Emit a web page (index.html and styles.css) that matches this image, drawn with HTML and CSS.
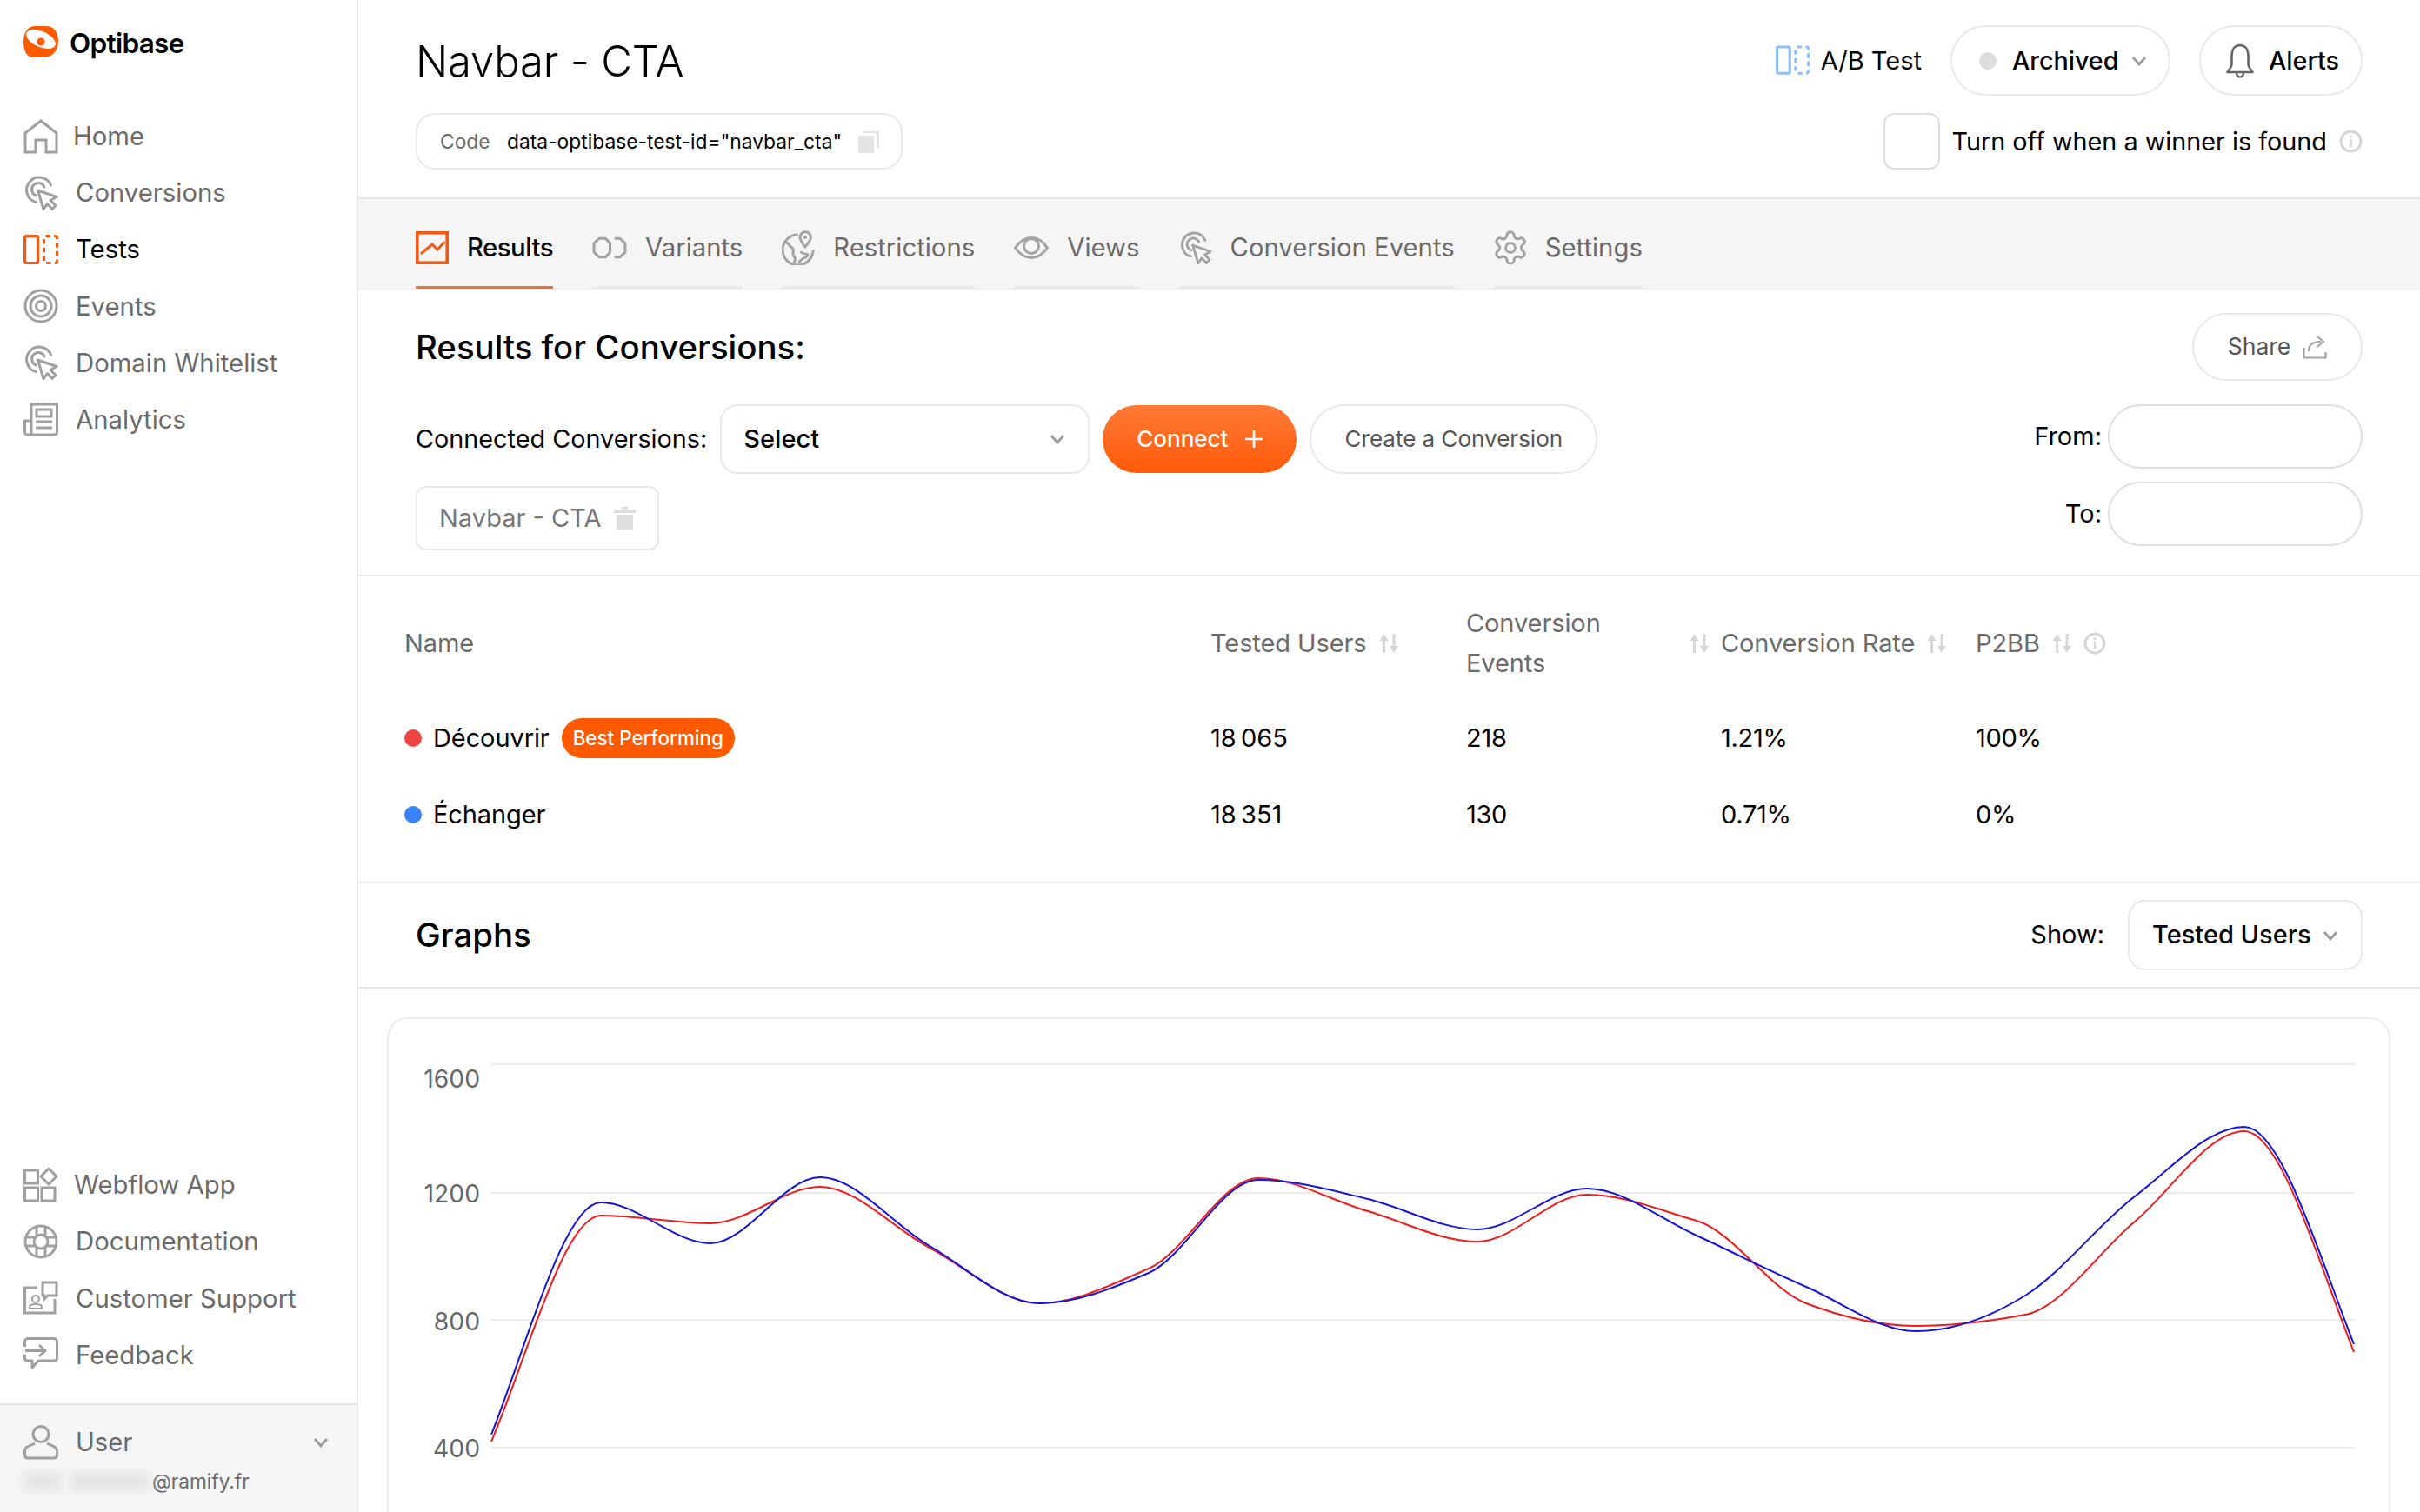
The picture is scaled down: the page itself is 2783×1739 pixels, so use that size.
FILE: index.html
```html
<!DOCTYPE html>
<html lang="en">
<head>
<meta charset="utf-8">
<title>Optibase - Navbar CTA</title>
<link rel="stylesheet" href="styles.css">
</head>
<body>
<svg class="sprite" aria-hidden="true">
  <symbol id="i-click" viewBox="0 0 40 40"><g fill="none" stroke="currentColor" stroke-width="3" stroke-linejoin="round" stroke-linecap="round"><path d="M14 30.5A14.5 14.5 0 1 1 31.5 11"/><path d="M14.5 23A7.5 7.5 0 1 1 24 13"/><path d="M16.5 17L38 24.5L31 28.5L37 34.5L33 38.5L27.5 32.5L23 38.5Z"/></g></symbol>
  <symbol id="i-ab" viewBox="0 0 40 34"><g fill="none" stroke="currentColor" stroke-width="3.2"><rect x="1.6" y="1.6" width="15" height="31" rx="1.5"/><rect x="23.5" y="1.6" width="15" height="31" rx="2" stroke-dasharray="5.5 4.2"/></g></symbol>
  <symbol id="i-chev" viewBox="0 0 18 12"><path d="M2 2L9 10L16 2" fill="none" stroke="currentColor" stroke-width="2.8"/></symbol>
  <symbol id="i-sort" viewBox="0 0 26 24"><g fill="#d6d6d6"><path d="M6 9h3v14H6z"/><path d="M7.500 1L12.500 9H2.500Z"/><path d="M17.500 1h3v14h-3z"/><path d="M19 23L14 15H24Z"/></g></symbol>
  <symbol id="i-info" viewBox="0 0 26 26"><circle cx="13" cy="13" r="11" fill="none" stroke="#d6d6d6" stroke-width="3"/><path d="M11.700 11h2.600v8.500h-2.600zM11.700 6.500h2.600v2.600h-2.600z" fill="#d6d6d6"/></symbol>
</svg>

<div class="app">
  <aside class="sidebar">
    <div class="brand">
      <svg class="brand-logo" viewBox="0 0 40 36"><path d="M13 0H26C35 0 40 7 40 17C40 29 33 36 22 36H12C4 36 0 29 0 18C0 7 5 0 13 0Z" fill="#ff5a00"/><ellipse cx="20" cy="15" rx="18" ry="9" transform="rotate(24 20 15)" fill="#fff"/><circle cx="20" cy="18" r="4.600" fill="#ff5a00"/></svg>
      <span class="brand-name">Optibase</span>
    </div>
    <nav class="nav">
      <a class="nav-item"><svg class="nav-icon" viewBox="0 0 40 40"><path d="M2 38V16L20 2L38 16V38H26V24H14V38Z" fill="none" stroke="currentColor" stroke-width="3"/></svg><span class="nav-label nav-label-home">Home</span></a>
      <a class="nav-item"><svg class="nav-icon"><use href="#i-click"/></svg><span class="nav-label">Conversions</span></a>
      <a class="nav-item nav-item-active"><svg class="nav-icon nav-icon-ab"><use href="#i-ab"/></svg><span class="nav-label">Tests</span></a>
      <a class="nav-item"><svg class="nav-icon" viewBox="0 0 40 40"><g fill="none" stroke="currentColor" stroke-width="3"><circle cx="20" cy="20" r="18"/><circle cx="20" cy="20" r="12"/><circle cx="20" cy="20" r="5.500"/></g></svg><span class="nav-label">Events</span></a>
      <a class="nav-item"><svg class="nav-icon"><use href="#i-click"/></svg><span class="nav-label">Domain Whitelist</span></a>
      <a class="nav-item"><svg class="nav-icon" viewBox="0 0 40 40"><g fill="none" stroke="currentColor" stroke-width="3"><path d="M8 37H35C37 37 38.500 36 38.500 34V2H9V35C9 36 8 37 6 37C3 37 1.500 36 1.500 34V21H9"/><rect x="15" y="8" width="17" height="8"/><path d="M14 22H33M14 29H33"/></g></svg><span class="nav-label">Analytics</span></a>
    </nav>
    <nav class="nav nav-bottom">
      <a class="nav-item"><svg class="nav-icon" viewBox="0 0 40 40"><g fill="none" stroke="currentColor" stroke-width="3"><rect x="1.500" y="3" width="15" height="15"/><rect x="1.500" y="23" width="15" height="15"/><rect x="21" y="23" width="15" height="15"/><path d="M29 1L38 10L29 19L20 10Z"/></g></svg><span class="nav-label nav-label-web">Webflow App</span></a>
      <a class="nav-item"><svg class="nav-icon" viewBox="0 0 40 40"><g fill="none" stroke="currentColor" stroke-width="3"><circle cx="20" cy="20" r="18"/><circle cx="20" cy="20" r="8"/><path d="M15 3V13M25 3V13M15 27V37M25 27V37M3 15H13M3 25H13M27 15H37M27 25H37"/></g></svg><span class="nav-label">Documentation</span></a>
      <a class="nav-item"><svg class="nav-icon" viewBox="0 0 40 40"><g fill="none" stroke="currentColor" stroke-width="3"><path d="M16 8H1.500V37H36V21"/><path d="M22 2H38V17H28L24 21V17H22Z"/></g><g fill="none" stroke="currentColor" stroke-width="2"><circle cx="14" cy="21" r="4"/><path d="M7 32V30C7 28 10 27 14 27S21 28 21 30V32Z"/></g></svg><span class="nav-label">Customer Support</span></a>
      <a class="nav-item"><svg class="nav-icon" viewBox="0 0 40 40"><g fill="none" stroke="currentColor" stroke-width="3" stroke-linejoin="round"><path d="M1.500 11V5C1.500 3 3 1.500 5 1.500H35C37 1.500 38.500 3 38.500 5V24C38.500 26 37 27 35 27H17L10 35V27H5C3 27 1.500 26 1.500 24V20"/><path d="M2 15.500H24M18 9L25 15.500L18 22"/></g></svg><span class="nav-label">Feedback</span></a>
    </nav>
    <div class="user">
      <div class="user-row">
        <svg class="nav-icon" viewBox="0 0 40 40"><g fill="none" stroke="currentColor" stroke-width="3"><circle cx="20" cy="10.500" r="9"/><path d="M13 21C8 24 1.500 24 1.500 30V34C1.500 37 3 38 5 38H35C37 38 38.500 37 38.500 34V30C38.500 24 32 24 27 21"/></g></svg>
        <span class="nav-label">User</span>
        <svg class="user-chev"><use href="#i-chev"/></svg>
      </div>
      <div class="user-mail"><span class="blur blur-a"></span><span class="blur blur-b"></span><span>@ramify.fr</span></div>
    </div>
  </aside>

  <main class="main">
    <header class="head">
      <div class="head-row">
        <h1 class="title">Navbar - CTA</h1>
        <div class="head-actions">
          <div class="ab"><svg class="ab-icon"><use href="#i-ab"/></svg><span>A/B Test</span></div>
          <div class="pill pill-status"><span class="status-dot"></span><span class="strong">Archived</span><svg class="chev"><use href="#i-chev"/></svg></div>
          <div class="pill pill-alerts"><svg class="bell" viewBox="0 0 32 40"><g fill="none" stroke="#666" stroke-width="2.600" stroke-linejoin="round"><path d="M16 2C9 2 6.500 8 6.500 14V24C6.500 28 3 30 1.500 33H30.500C29 30 25.500 28 25.500 24V14C25.500 8 23 2 16 2Z"/><path d="M12 33C12 37.500 14 38.500 16 38.500S20 37.500 20 33"/></g></svg><span class="strong">Alerts</span></div>
        </div>
      </div>
      <div class="head-row head-row-2">
        <div class="code"><span class="code-label">Code</span><span class="code-value">data-optibase-test-id="navbar_cta"</span>
          <svg class="copy" viewBox="0 0 24 26"><rect x="0" y="6" width="18" height="20" fill="#e3e3e3"/><path d="M6 2H23V20" fill="none" stroke="#e3e3e3" stroke-width="2"/></svg>
        </div>
        <div class="autooff"><span class="check"></span><span class="autooff-text">Turn off when a winner is found</span><svg class="info"><use href="#i-info"/></svg></div>
      </div>
    </header>

    <div class="tabs">
      <a class="tab tab-active"><svg class="tab-icon" viewBox="0 0 38 38"><rect x="1.800" y="1.800" width="34.400" height="34.400" fill="none" stroke="#f05a16" stroke-width="3.600"/><path d="M6 26L19 15L25 21L33.500 12" fill="none" stroke="#f05a16" stroke-width="3"/></svg><span>Results</span></a>
      <a class="tab"><svg class="tab-icon tab-icon-wide" viewBox="0 0 39 24"><g fill="none" stroke="#a3a3a3" stroke-width="3" stroke-linejoin="round"><path d="M8 1.500H15L20 7V17L15 22.500H8L2 17V7Z"/><path d="M25 1.500H31L37 7V17L31 22.500H25"/></g></svg><span>Variants</span></a>
      <a class="tab"><svg class="tab-icon" viewBox="0 0 38 40"><g fill="none" stroke="#a3a3a3" stroke-width="3" stroke-linejoin="round"><path d="M19 5A17.500 17.500 0 1 0 36 22"/><path d="M4 13C9 15 8 18 12 20C16 22 10 27 15 31C16 34 15 36 14 38"/><path d="M20 38C21 31 29 33 30 28C28 26 23 28 22 24"/><path d="M27 19C23 14 21 11 21 8A6.200 6.200 0 0 1 33.500 8C33.500 11 31 14 27 19Z"/></g><circle cx="27" cy="8" r="2" fill="#a3a3a3"/></svg><span>Restrictions</span></a>
      <a class="tab"><svg class="tab-icon tab-icon-wide" viewBox="0 0 40 26"><g fill="none" stroke="#a3a3a3" stroke-width="3" stroke-linejoin="round"><path d="M1.500 13C7 5 13 1.500 20 1.500S33 5 38.500 13C33 21 27 24.500 20 24.500S7 21 1.500 13Z"/><circle cx="20" cy="11" r="8.500"/></g></svg><span>Views</span></a>
      <a class="tab"><svg class="tab-icon tab-icon-click"><use href="#i-click"/></svg><span>Conversion Events</span></a>
      <a class="tab"><svg class="tab-icon" viewBox="1.500 1.500 21 21"><g fill="none" stroke="#a3a3a3" stroke-width="1.600"><path d="M12.220 2h-.44a2 2 0 0 0-2 2v.18a2 2 0 0 1-1 1.730l-.43.250a2 2 0 0 1-2 0l-.15-.08a2 2 0 0 0-2.730.730l-.22.380a2 2 0 0 0 .73 2.730l.15.100a2 2 0 0 1 1 1.720v.510a2 2 0 0 1-1 1.740l-.15.090a2 2 0 0 0-.73 2.730l.22.380a2 2 0 0 0 2.730.730l.15-.08a2 2 0 0 1 2 0l.43.250a2 2 0 0 1 1 1.730V20a2 2 0 0 0 2 2h.44a2 2 0 0 0 2-2v-.18a2 2 0 0 1 1-1.730l.43-.25a2 2 0 0 1 2 0l.15.080a2 2 0 0 0 2.730-.730l.22-.39a2 2 0 0 0-.73-2.730l-.15-.08a2 2 0 0 1-1-1.740v-.5a2 2 0 0 1 1-1.740l.15-.09a2 2 0 0 0 .73-2.730l-.22-.38a2 2 0 0 0-2.730-.73l-.15.08a2 2 0 0 1-2 0l-.43-.25a2 2 0 0 1-1-1.730V4a2 2 0 0 0-2-2z"/><circle cx="12" cy="12" r="3"/></g></svg><span>Settings</span></a>
    </div>

    <section class="results">
      <div class="results-top">
        <h2 class="h2">Results for Conversions:</h2>
        <div class="pill pill-share"><span>Share</span><svg class="share" viewBox="0 0 28 28"><g fill="none" stroke="#a3a3a3" stroke-width="2.200"><path d="M1.500 15V26.500H26.500V20"/><path d="M7 19C7 12 11 8 21 8M16 1.500L24 8L16 14.500"/></g></svg></div>
      </div>
      <div class="results-body">
        <div class="connect">
          <div class="connect-row">
            <span class="connect-label">Connected Conversions:</span>
            <div class="select select-conv"><span class="strong">Select</span><svg class="chev"><use href="#i-chev"/></svg></div>
            <div class="btn-primary"><span>Connect</span><svg class="plus" viewBox="0 0 20 20"><path d="M10 0V20M0 10H20" stroke="#fff" stroke-width="2.600"/></svg></div>
            <div class="btn-ghost">Create a Conversion</div>
          </div>
          <div class="tag"><span>Navbar - CTA</span><svg class="trash" viewBox="0 0 25 26"><path d="M9 0H16V3H25V7H0V3H9ZM3 9H22V26H3Z" fill="#dedede"/></svg></div>
        </div>
        <div class="dates">
          <div class="date-row"><span>From:</span><span class="date-input"></span></div>
          <div class="date-row"><span>To:</span><span class="date-input"></span></div>
        </div>
      </div>
    </section>

    <section class="table">
      <div class="tr tr-head">
        <div class="th">Name</div>
        <div class="th"><span>Tested Users</span><svg class="sort"><use href="#i-sort"/></svg></div>
        <div class="th th-split"><span class="th-wrap">Conversion Events</span><svg class="sort"><use href="#i-sort"/></svg></div>
        <div class="th"><span>Conversion Rate</span><svg class="sort"><use href="#i-sort"/></svg></div>
        <div class="th"><span>P2BB</span><svg class="sort"><use href="#i-sort"/></svg><svg class="info"><use href="#i-info"/></svg></div>
      </div>
      <div class="tr">
        <div class="td td-name"><span class="dot dot-red"></span><span>Découvrir</span><span class="badge">Best Performing</span></div>
        <div class="td">18&#8239;065</div>
        <div class="td">218</div>
        <div class="td">1.21%</div>
        <div class="td">100%</div>
      </div>
      <div class="tr">
        <div class="td td-name"><span class="dot dot-blue"></span><span>Échanger</span></div>
        <div class="td">18&#8239;351</div>
        <div class="td">130</div>
        <div class="td">0.71%</div>
        <div class="td">0%</div>
      </div>
    </section>

    <section class="graphs-head">
      <h2 class="h2">Graphs</h2>
      <div class="show"><span>Show:</span><div class="select select-show"><span class="strong">Tested Users</span><svg class="chev"><use href="#i-chev"/></svg></div></div>
    </section>

    <div class="chart-card">
      <svg class="chart" viewBox="447 1173 2300 566">
        <g class="grid">
          <path d="M565 1225H2708M565 1373H2708M565 1519H2708M565 1666H2708"/>
        </g>
        <g class="axis">
          <text x="552" y="1252">1600</text>
          <text x="552" y="1384">1200</text>
          <text x="552" y="1531">800</text>
          <text x="552" y="1677">400</text>
        </g>
        <path class="line line-red" d="M565 1659C607 1560 649 1399 691 1399S775 1408 817 1408S901 1366 943 1366S1027 1414 1069 1436S1153 1500 1195 1500S1279 1478 1321 1460S1405 1356 1447 1356S1531 1382 1573 1394S1657 1429 1699 1429S1783 1375 1825 1375S1909 1393 1951 1405S2035 1484 2077 1500S2161 1526 2203 1526S2287 1521 2329 1513S2413 1441 2455 1406S2539 1302 2581 1302S2665 1450 2707 1556"/>
        <path class="line line-blue" d="M565 1651C607 1545 649 1384 691 1384S775 1431 817 1431S901 1355 943 1355S1027 1410 1069 1434S1153 1500 1195 1500S1279 1483 1321 1465S1405 1358 1447 1358S1531 1370 1573 1380S1657 1415 1699 1415S1783 1368 1825 1368S1909 1403 1951 1422S2035 1463 2077 1481S2161 1532 2203 1532S2287 1517 2329 1491S2413 1409 2455 1377S2539 1297 2581 1297S2665 1440 2707 1547"/>
      </svg>
    </div>
  </main>
</div>
</body>
</html>
```

FILE: styles.css
```css
* { box-sizing: border-box; }
html, body { margin: 0; padding: 0; }
body {
  width: 2783px;
  height: 1739px;
  overflow: hidden;
  background: #fff;
  color: #000;
  font-family: Inter, "Noto Sans", sans-serif;
  font-size: 29px;
  line-height: 1.2;
}
.sprite { display: none; }
.strong { font-weight: 500; }
h1, h2 { margin: 0; }

.app { display: flex; height: 1739px; }

/* Sidebar */
.sidebar {
  width: 412px;
  flex: none;
  display: flex;
  flex-direction: column;
  border-right: 2px solid #e9e9e9;
  padding-top: 30px;
}
.brand { display: flex; align-items: center; gap: 13px; height: 36px; padding-left: 27px; }
.brand-logo { width: 40px; height: 36px; }
.brand-name { font-size: 31.500px; font-weight: 600; letter-spacing: -0.7px; padding-top: 3px; }
.nav { display: flex; flex-direction: column; margin-top: 58px; padding-left: 27px; }
.nav-bottom { margin-top: auto; margin-bottom: 23px; }
.nav-item { display: flex; align-items: center; gap: 20px; height: 65.200px; color: #9c9c9c; }
.nav-icon { width: 40px; height: 40px; flex: none; color: #a0a0a0; }
.nav-icon-ab { color: #f05a16; height: 34px; }
.nav-label { color: #6b6b6b; font-size: 29.300px; }
.nav-label-home { margin-left: -3px; }
.nav-label-web { margin-left: -2px; }
.nav-item-active .nav-label { color: #000; }
.user {
  height: 125px;
  background: #f5f5f5;
  border-top: 2px solid #e4e4e4;
  padding: 23px 0 0 27px;
  color: #6b6b6b;
}
.user-row { display: flex; align-items: center; gap: 20px; height: 40px; }
.user-chev { width: 18px; height: 12px; margin-left: auto; margin-right: 32px; color: #9c9c9c; }
.user-mail { display: flex; align-items: center; height: 30px; margin-top: 10px; font-size: 22.600px; }
.blur { display: block; height: 22px; background: #e6e6e6; filter: blur(5px); }
.blur-a { width: 43px; margin-right: 10px; }
.blur-b { width: 92px; margin-right: 3px; }

/* Main */
.main { flex: 1; min-width: 0; display: flex; flex-direction: column; overflow: hidden; }
.main > * { flex: none; }
.head { height: 227px; padding: 29px 66px 0 66px; display: flex; flex-direction: column; }
.head-row { display: flex; align-items: center; justify-content: space-between; height: 81px; }
.head-row-2 { height: 65px; margin-top: 20px; }
.title { font-size: 49px; font-weight: 350; letter-spacing: -0.2px; padding-top: 4px; }
.head-actions { display: flex; align-items: center; }
.head-actions span:not(.status-dot) { padding-top: 2px; }
.ab { display: flex; align-items: center; gap: 13px; margin-right: 33px; }
.ab-icon { width: 39px; height: 34px; color: #8cc0fa; }
.pill { display: flex; align-items: center; border: 2px solid #e9e9e9; border-radius: 41px; height: 81px; }
.pill-status { width: 253px; padding-left: 31px; font-size: 28.700px; }
.status-dot { width: 20px; height: 20px; border-radius: 50%; background: #dcdcdc; margin-right: 18px; flex: none; }
.chev { width: 18px; height: 12px; color: #9c9c9c; flex: none; }
.pill-status .chev { margin-left: 15px; }
.pill-alerts { width: 188px; margin-left: 33px; padding-left: 29px; gap: 17px; font-size: 28.700px; }
.bell { width: 32px; height: 40px; }
.code {
  display: flex;
  align-items: center;
  width: 560px;
  height: 65px;
  padding-left: 26px;
  border: 2px solid #e9e9e9;
  border-radius: 22px;
  font-size: 22.800px;
}
.code-label { color: #6b6b6b; width: 77px; }
.code-value { width: 404px; white-space: nowrap; }
.copy { width: 24px; height: 26px; }
.autooff { display: flex; align-items: center; }
.check { width: 65px; height: 65px; border: 2px solid #dfdfdf; border-radius: 12px; margin-right: 13px; }
.autooff-text { margin-right: 14px; font-size: 28.800px; padding-top: 2px; }
.autooff .info { width: 27px; height: 27px; }
.info { width: 26px; height: 26px; flex: none; }

/* Tabs */
.tabs {
  display: flex;
  gap: 45px;
  height: 106px;
  padding-left: 66px;
  background: #f5f5f5;
  border-top: 2px solid #e8e8e8;
  border-bottom: 1px solid #ececec;
  font-size: 29.300px;
}
.tab {
  display: flex;
  align-items: center;
  gap: 21px;
  color: #6b6b6b;
  border-bottom: 3px solid #ebebeb;
  padding-top: 11px;
}
.tab-active { color: #000; font-weight: 500; letter-spacing: -0.5px; border-bottom-color: #f0703a; }
.tab-icon { width: 38px; height: 40px; flex: none; }
.tab-icon-wide { width: 40px; height: 26px; }
.tab-icon-click { color: #a3a3a3; }

/* Results */
.results { padding: 27px 66px 28px 66px; border-bottom: 2px solid #e9e9e9; }
.results-top { display: flex; align-items: center; justify-content: space-between; height: 78px; }
.h2 { font-size: 38.400px; font-weight: 500; }
.pill-share {
  width: 196px;
  height: 78px;
  justify-content: center;
  gap: 14px;
  color: #555;
  font-size: 26.500px;
}
.share { width: 28px; height: 28px; }
.results-body { display: flex; justify-content: space-between; margin-top: 27px; }
.connect-row { display: flex; align-items: center; gap: 15px; }
.connect-label { font-size: 28.800px; }
.select {
  display: flex;
  align-items: center;
  justify-content: space-between;
  border: 2px solid #e9e9e9;
  border-radius: 20px;
}
.select-conv { width: 425px; height: 80px; padding: 0 26px 0 25px; }
.btn-primary {
  display: flex;
  align-items: center;
  justify-content: center;
  gap: 20px;
  width: 223px;
  height: 78px;
  border-radius: 39px;
  background: linear-gradient(180deg, #ff7a35, #ff5a0a);
  color: #fff;
  font-size: 26px;
  font-weight: 500;
}
.plus { width: 20px; height: 20px; }
.btn-ghost {
  display: flex;
  align-items: center;
  justify-content: center;
  width: 331px;
  height: 80px;
  border: 2px solid #e9e9e9;
  border-radius: 40px;
  color: #555;
  font-size: 26px;
}
.tag {
  display: flex;
  align-items: center;
  gap: 14px;
  width: 280px;
  height: 74px;
  margin-top: 14px;
  padding-left: 25px;
  border: 2px solid #e9e9e9;
  border-radius: 12px;
  color: #777;
}
.trash { width: 25px; height: 26px; }
.dates { display: flex; flex-direction: column; gap: 15px; }
.date-row { display: flex; align-items: center; justify-content: flex-end; gap: 7px; }
.date-input { display: block; width: 293px; height: 74px; border: 2px solid #e0e0e0; border-radius: 37px; }

/* Table */
.table { height: 351px; padding-top: 12px; }
.tr { display: grid; grid-template-columns: 927px 294px 293px 293px 1fr; height: 88px; padding-left: 53px; }
.tr-head { height: 130px; }
.th, .td { display: flex; align-items: center; }
.td { letter-spacing: -0.3px; }
.td-name { letter-spacing: -0.1px; }
.th { gap: 12px; color: #6b6b6b; letter-spacing: -0.1px; }
.th-split { justify-content: space-between; padding-right: 12px; line-height: 46px; }
.th-wrap { width: 160px; }
.sort { width: 26px; height: 24px; flex: none; }
.dot { width: 20px; height: 20px; border-radius: 50%; margin-right: 13px; }
.dot-red { background: #ef4444; }
.dot-blue { background: #3b82f6; }
.badge {
  display: flex;
  align-items: center;
  height: 46px;
  margin-left: 14px;
  padding: 0 13px;
  border-radius: 23px;
  background: #ff5a00;
  color: #fff;
  font-size: 22.400px;
  font-weight: 500;
  letter-spacing: 0;
}

/* Graphs */
.graphs-head {
  display: flex;
  align-items: center;
  justify-content: space-between;
  height: 123px;
  padding: 0 66px 0 66px;
  border-top: 2px solid #e9e9e9;
  border-bottom: 2px solid #e9e9e9;
}
.show { display: flex; align-items: center; gap: 27px; }
.select-show { width: 270px; height: 81px; padding: 0 26px 0 26px; }
.chart-card {
  height: 700px;
  margin: 33px 34px 0 33px;
  border: 2px solid #ececec;
  border-radius: 24px;
  overflow: hidden;
}
.chart { display: block; width: 2300px; height: 566px; }
.grid path { fill: none; stroke: #ededed; stroke-width: 2; }
.axis text { font-family: Inter, "Noto Sans", sans-serif; font-size: 28.300px; fill: #666; text-anchor: end; }
.line { fill: none; stroke-width: 2; }
.line-red { stroke: #ee1c1c; }
.line-blue { stroke: #1414d8; }
```
